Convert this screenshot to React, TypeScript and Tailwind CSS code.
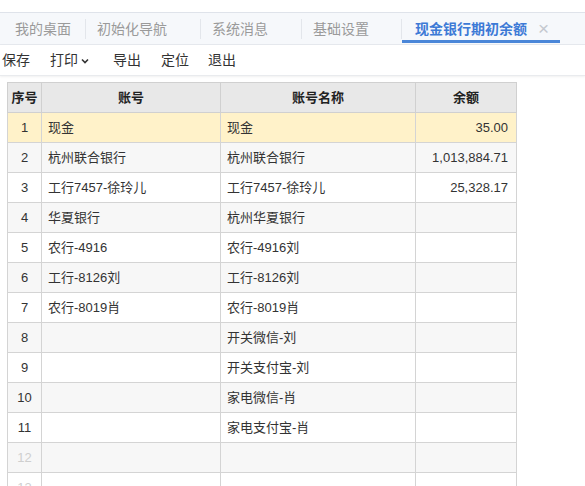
import React from 'react';

const tabs = [
  { t: '我的桌面', cls: 'w-[86px] pl-[15px]' },
  { t: '初始化导航', cls: 'w-[115px] pl-[11px]' },
  { t: '系统消息', cls: 'w-[101px] pl-[11px]' },
  { t: '基础设置', cls: 'w-[100px] pl-[11px]' },
];

const rows: [string, string, string][] = [
  ['现金', '现金', '35.00'],
  ['杭州联合银行', '杭州联合银行', '1,013,884.71'],
  ['工行7457-徐玲儿', '工行7457-徐玲儿', '25,328.17'],
  ['华夏银行', '杭州华夏银行', ''],
  ['农行-4916', '农行-4916刘', ''],
  ['工行-8126刘', '工行-8126刘', ''],
  ['农行-8019肖', '农行-8019肖', ''],
  ['', '开关微信-刘', ''],
  ['', '开关支付宝-刘', ''],
  ['', '家电微信-肖', ''],
  ['', '家电支付宝-肖', ''],
  ['', '', ''],
  ['', '', ''],
];

export default function App() {
  return (
    <div
      className="w-[585px] h-[486px] overflow-hidden bg-white text-[#333]"
      style={{ fontFamily: '"Liberation Sans", "Noto Sans CJK SC", sans-serif' }}
    >
      <div className="h-3" />
      {/* tab bar */}
      <div className="h-[33px] flex items-stretch bg-[#f6f8fb] border-t border-[#dfe3ea] border-b border-b-[#e6e9ee] text-[14px]">
        {tabs.map(({ t, cls }) => (
          <div key={t} className={`flex items-center justify-between ${cls}`}>
            <span className="text-[#9a9a9a] pt-[1px]">{t}</span>
            <span className="w-px h-5 bg-[#e3e6eb]" />
          </div>
        ))}
        <div className="relative flex items-center w-[158px] pl-[13px]">
          <span className="text-[#3d7ad6] font-bold pt-[1px]">现金银行期初余额</span>
          <span className="ml-[11px] text-[#c4c8cf] text-[19px] leading-none font-light">×</span>
          <span className="absolute left-0 right-0 bottom-[1px] h-[3px] bg-[#4a86d8]" />
        </div>
      </div>
      {/* toolbar */}
      <div className="h-[31px] flex items-center text-[14px] text-[#333] border-b border-[#e9ebee] shadow-[0_1px_2px_rgba(0,0,0,0.06)]">
        <span className="ml-[2px] pt-[1px]">保存</span>
        <span className="ml-[20px] flex items-center pt-[1px]">
          打印
          <svg className="ml-[3px]" width="8" height="6" viewBox="0 0 8 6">
            <path d="M1 1.5 L4 4.5 L7 1.5" fill="none" stroke="#333" strokeWidth="1.6" />
          </svg>
        </span>
        <span className="ml-[24px] pt-[1px]">导出</span>
        <span className="ml-[20px] pt-[1px]">定位</span>
        <span className="ml-[19px] pt-[1px]">退出</span>
      </div>
      {/* table */}
      <div className="pl-[7px] pt-[6px]">
        <table className="border-collapse text-[13px] table-fixed w-[509px]">
          <colgroup>
            <col className="w-[34px]" />
            <col className="w-[179px]" />
            <col className="w-[195px]" />
            <col className="w-[101px]" />
          </colgroup>
          <thead>
            <tr className="h-[30px] bg-[#e8e8e8] text-[#222]">
              <th className="border border-[#d0d0d0] font-bold">序号</th>
              <th className="border border-[#d0d0d0] font-bold">账号</th>
              <th className="border border-[#d0d0d0] font-bold">账号名称</th>
              <th className="border border-[#d0d0d0] font-bold">余额</th>
            </tr>
          </thead>
          <tbody>
            {rows.map((r, i) => {
              const bg = i === 0 ? 'bg-[#fff2c9]' : i % 2 === 1 ? 'bg-[#f7f7f7]' : 'bg-white';
              return (
                <tr key={i} className={`h-[30px] ${bg}`}>
                  <td className={`border border-[#d4d4d4] text-center ${i >= 11 ? 'text-[#cfcfcf]' : 'text-[#333]'}`}>{i + 1}</td>
                  <td className="border border-[#d4d4d4] pl-[6px] whitespace-nowrap">{r[0]}</td>
                  <td className="border border-[#d4d4d4] pl-[6px] whitespace-nowrap">{r[1]}</td>
                  <td className="border border-[#d4d4d4] pr-[8px] text-right whitespace-nowrap">{r[2]}</td>
                </tr>
              );
            })}
          </tbody>
        </table>
      </div>
    </div>
  );
}
